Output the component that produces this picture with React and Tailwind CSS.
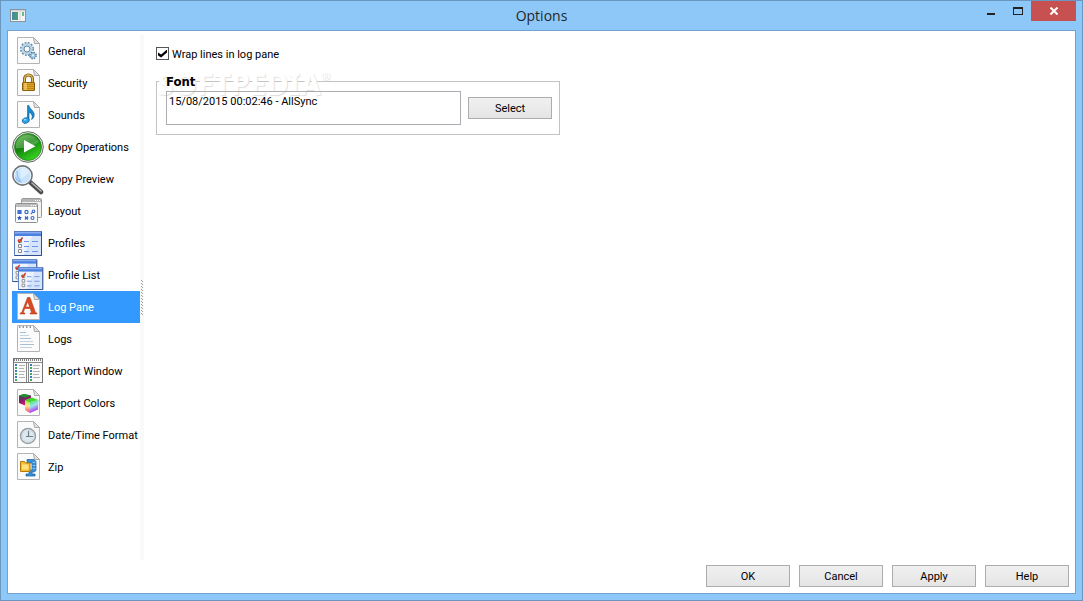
import { useState } from 'react';

// Paper sheet shared by most of the category icons
function Sheet({ children }) {
  return (
    <>
      <path d="M5.500 2.500h16l6 6v20h-22z" fill="#fbfbfb" stroke="#b4b4b4" />
      <path d="M21.500 2.500l6 6h-5z" fill="#e3e3e3" stroke="#a9a9a9" />
      {children}
    </>
  );
}

function GeneralIcon() {
  return (
    <Sheet>
      <circle cx="15" cy="14" r="5.500" fill="none" stroke="#66879f" strokeWidth="3" strokeDasharray="1.700 1.180" />
      <circle cx="15" cy="14" r="4.500" fill="none" stroke="#b3d6ec" strokeWidth="2.500" />
      <circle cx="15" cy="14" r="3" fill="#f8fafb" stroke="#5a7890" strokeWidth="0.900" />
      <circle cx="21" cy="20.500" r="2.600" fill="none" stroke="#4c7090" strokeWidth="2.500" strokeDasharray="1.300 0.740" />
      <circle cx="21" cy="20.500" r="1.900" fill="#e5f1f9" stroke="#8fbddc" strokeWidth="1.500" />
    </Sheet>
  );
}

function SecurityIcon() {
  return (
    <Sheet>
      <path d="M12.500 15v-3a4 4 0 0 1 8 0v3" fill="none" stroke="#7c5a12" strokeWidth="3" />
      <path d="M12.500 15v-3a4 4 0 0 1 8 0v3" fill="none" stroke="#e3be5b" strokeWidth="1.300" />
      <rect x="10.500" y="15.500" width="12" height="8" rx="0.500" fill="#e0a22a" stroke="#8a5d0b" />
      <path d="M11 17.500h11M11 19.500h11M11 21.500h11" stroke="#b57e13" strokeWidth="0.800" />
      <path d="M12 16h3v7h-3z" fill="#ffe38b" opacity="0.500" />
    </Sheet>
  );
}

function SoundsIcon() {
  return (
    <Sheet>
      <path d="M17 6.500c.5 4 6.500 5.500 5 11-.5 1.500-1.500 2.500-2.500 3 2-4-.5-6.500-2.500-7v8h-1.500v-15z" fill="#1787cf" stroke="#0d5f9e" strokeWidth="0.600" />
      <ellipse cx="13.800" cy="21.500" rx="3.600" ry="2.700" fill="#2ba4e8" stroke="#0d5f9e" strokeWidth="0.700" transform="rotate(-20 13.800 21.500)" />
      <ellipse cx="13" cy="20.700" rx="1.500" ry="0.800" fill="#9edcff" />
    </Sheet>
  );
}

function CopyOperationsIcon() {
  return (
    <>
      <defs>
        <linearGradient id="play" x1="0" y1="0" x2="0.600" y2="1">
          <stop offset="0" stopColor="#62b84c" />
          <stop offset="0.500" stopColor="#12800c" />
          <stop offset="1" stopColor="#35d320" />
        </linearGradient>
      </defs>
      <circle cx="16" cy="16" r="15.300" fill="#ededed" stroke="#5d6b5c" />
      <circle cx="16" cy="16" r="13.500" fill="url(#play)" stroke="#307c2b" strokeWidth="0.800" />
      <path d="M4 13a12.300 12.300 0 0 1 23-2c-6 4-14 7-23 6z" fill="#fff" opacity="0.220" />
      <path d="M12 9l11.500 6.300L12 21.500z" fill="#fff" />
    </>
  );
}

function CopyPreviewIcon() {
  return (
    <>
      <path d="M18.500 19.500l10.500 9.500" stroke="#4d4d4d" strokeWidth="4.500" strokeLinecap="round" />
      <path d="M20 20l9 8" stroke="#b5b5b5" strokeWidth="1.500" strokeLinecap="round" />
      <circle cx="10.500" cy="12.500" r="9.500" fill="#c8e3fb" stroke="#6f7478" strokeWidth="1.800" />
      <circle cx="10.500" cy="12.500" r="8.300" fill="none" stroke="#edf6ff" />
      <path d="M5 8c0 5 1 8 4 11M3.500 14c1 3 3 5 6 5" fill="none" stroke="#8fbdf0" strokeWidth="1.200" />
      <path d="M8 6c4-2 8 0 9 4l-8 6z" fill="#e7f4ff" opacity="0.700" />
    </>
  );
}

function LayoutIcon() {
  return (
    <>
      <rect x="9.500" y="3.500" width="20" height="19" rx="1" fill="#f2f2f2" stroke="#999" />
      <path d="M10 4h19v3H10z" fill="#b5b5b5" />
      <path d="M23 5.500h5" stroke="#fff" strokeDasharray="1 1" />
      <rect x="3.500" y="8.500" width="22" height="19" rx="1" fill="#fcfcfc" stroke="#909090" />
      <path d="M4 9h21v3H4z" fill="#bdbdbd" />
      <path d="M19 10.500h5" stroke="#fff" strokeDasharray="1 1" />
      <g fill="none" stroke="#3e6cc9" strokeWidth="1.200">
        <path d="M6 15.500h3v3H6zM6 18.500l3-3" fill="#7ba1e8" />
        <circle cx="14.500" cy="17" r="1.600" />
        <circle cx="21.500" cy="16.300" r="1.300" />
        <path d="M20.500 17.300l-1.700 1.700M13 21.500l3 3m0-3l-3 3m0-1.500h3" />
        <circle cx="20.500" cy="23" r="1.500" />
      </g>
      <path d="M7.500 20.500l.8 1.600 1.700.1-1.300 1.200.4 1.800-1.600-.9-1.600.9.4-1.800L5 22.200l1.700-.1z" fill="#2f5cb9" />
    </>
  );
}

function ChecklistWindow() {
  return (
    <>
      <rect x="0.500" y="0.500" width="27" height="24" fill="#eef4ff" stroke="#5b7dbd" />
      <path d="M20 1h7v23H10z" fill="#d5e3fb" />
      <path d="M1 1h26v4H1z" fill="#4a80e0" />
      <path d="M1 1h26v1.500H1z" fill="#86adf3" />
      <path d="M27.500 1v23.500H1" fill="none" stroke="#315089" />
      <path d="M5.500 8.500h3v3h-3zM5.500 13.500h3v3h-3zM5.500 18.500h3v3h-3z" transform="translate(-1)" fill="#fff" stroke="#8a8a8a" />
      <path d="M4 9l1.500 2L8.500 6.500" fill="none" stroke="#cf3218" strokeWidth="1.500" />
      <path d="M10 10.500h5m3 0h6M10 15.500h5m3 0h6M10 20.500h5m3 0h6" stroke="#6b95e2" />
    </>
  );
}

function ProfilesIcon() {
  return (
    <g transform="translate(2 4)">
      <ChecklistWindow />
    </g>
  );
}

function ProfileListIcon() {
  return (
    <>
      <g transform="scale(.9 .92)">
        <ChecklistWindow />
      </g>
      <g transform="translate(6 8) scale(.9 .92)">
        <ChecklistWindow />
      </g>
    </>
  );
}

function LogPaneIcon() {
  return (
    <Sheet>
      <path d="M15.500 6.500h2.500l5.500 15 1.500.7V23h-7v-.8l1.500-.7-1.300-4h-5.400l-1.500 4 1.700.7v.8H8v-.8l1.700-.7zm.2 4L13.600 16h4.100z" fill="#dc4a22" stroke="#a8300f" strokeWidth="0.500" fillRule="evenodd" />
    </Sheet>
  );
}

function LogsIcon() {
  return (
    <Sheet>
      <path d="M7 4h14" stroke="#9a9a9a" strokeWidth="2" strokeDasharray="1.500 2" />
      <path d="M8 9.500h6M8 15.500h11M8 21.500h14" stroke="#a5bfd8" />
      <path d="M8 12.500h9M8 18.500h13M8 24.500h12" stroke="#c4d2df" />
    </Sheet>
  );
}

function ReportWindowIcon() {
  return (
    <>
      <rect x="1.500" y="3.500" width="29" height="24" fill="#fafafa" stroke="#777" />
      <path d="M2 5h28" stroke="#808080" strokeWidth="2" strokeDasharray="1 1" />
      <path d="M2 7.500h28M14.500 8v19M16.500 8v19" stroke="#888" />
      <path d="M7 10.500h6M7 13.500h5M7 16.500h6M7 19.500h5M7 22.500h6M21 10.500h7M21 13.500h6M21 16.500h7M21 19.500h6M21 22.500h7" stroke="#b4b4b4" />
      <path d="M4 9v17M19 9v17" stroke="#387cb6" strokeWidth="2" strokeDasharray="2 4" />
      <path d="M4 12v14M19 12v14" stroke="#43a765" strokeWidth="2" strokeDasharray="2 4" />
    </>
  );
}

function ReportColorsIcon() {
  return (
    <Sheet>
      <defs>
        <linearGradient id="cubeLeft" x1="0" y1="0" x2="0" y2="1">
          <stop offset="0" stopColor="#7df03a" />
          <stop offset="0.450" stopColor="#fbe98a" />
          <stop offset="1" stopColor="#ff3a7c" />
        </linearGradient>
        <linearGradient id="cubeRight" x1="0" y1="0" x2="0.300" y2="1">
          <stop offset="0" stopColor="#3ce84a" />
          <stop offset="0.500" stopColor="#9ce0f0" />
          <stop offset="1" stopColor="#b41ff0" />
        </linearGradient>
        <linearGradient id="cubeBack" x1="0" y1="0" x2="0.600" y2="1">
          <stop offset="0" stopColor="#1d6b2a" />
          <stop offset="0.500" stopColor="#7c1f6a" />
          <stop offset="1" stopColor="#f01878" />
        </linearGradient>
      </defs>
      <path d="M7 8.500l5-1.500 7 1.500v8l-6 2-6-2.500z" fill="url(#cubeBack)" />
      <path d="M7 8.500l5-1.500 7 1.500-6 2z" fill="#1b9430" />
      <path d="M13 13l5 2v11l-5-3z" fill="url(#cubeLeft)" />
      <path d="M18 15l8.500-2-.5 9.500-8 3.500z" fill="url(#cubeRight)" />
      <path d="M13 13l7-2.500 6.500 2.500-8.500 2z" fill="#3fdc2c" />
    </Sheet>
  );
}

function DateTimeIcon() {
  return (
    <Sheet>
      <circle cx="16" cy="17" r="7.500" fill="#dfe8ed" stroke="#9aa2a8" strokeWidth="1.500" />
      <circle cx="16" cy="17" r="5.700" fill="none" stroke="#b7c9d4" strokeDasharray="1 2" />
      <path d="M16.500 12v5.500H21M16.500 17.500H14" fill="none" stroke="#6c7f8e" strokeWidth="1.200" />
    </Sheet>
  );
}

function ZipIcon() {
  return (
    <Sheet>
      <path d="M15 8.500h7l2 2v9l-2 1.500h-2v2h3v2h-9v-2h3v-4h3v-7h-5z" fill="#3a8fdb" stroke="#155e9f" strokeWidth="0.700" />
      <path d="M8.500 10.500h4l1 1.500h4.500v8.500H8.500z" fill="#f5bd2d" stroke="#b57a08" />
      <path d="M10 13.500h6.500v5H10z" fill="#ffe27e" />
      <path d="M20.500 11.500h3M20.500 14.500h3M20.500 17.500h3" stroke="#8bc2ef" />
    </Sheet>
  );
}

const CATEGORIES = [
  { label: 'General', Icon: GeneralIcon },
  { label: 'Security', Icon: SecurityIcon },
  { label: 'Sounds', Icon: SoundsIcon },
  { label: 'Copy Operations', Icon: CopyOperationsIcon },
  { label: 'Copy Preview', Icon: CopyPreviewIcon },
  { label: 'Layout', Icon: LayoutIcon },
  { label: 'Profiles', Icon: ProfilesIcon },
  { label: 'Profile List', Icon: ProfileListIcon },
  { label: 'Log Pane', Icon: LogPaneIcon },
  { label: 'Logs', Icon: LogsIcon },
  { label: 'Report Window', Icon: ReportWindowIcon },
  { label: 'Report Colors', Icon: ReportColorsIcon },
  { label: 'Date/Time Format', Icon: DateTimeIcon },
  { label: 'Zip', Icon: ZipIcon },
];

function PushButton({ children }) {
  return (
    <button
      type="button"
      className="h-[22px] w-[84px] shrink-0 border border-[#acacac] bg-linear-to-b from-[#f0f0f0] to-[#e5e5e5] pt-[2px] text-center hover:border-[#7eb4ea]"
    >
      {children}
    </button>
  );
}

function TitleBar() {
  return (
    <header className="grid h-[29px] grid-cols-[1fr_auto_1fr] items-center">
      <svg width="16" height="14" viewBox="0 0 16 14" className="ml-[3px]" aria-hidden="true">
        <rect x="0.500" y="0.500" width="15" height="12" fill="#f4f4f4" stroke="#8d9499" />
        <path d="M1 1h14v1.500H1z" fill="#cfd5d8" />
        <path d="M2 3h6v8H2z" fill="#4a9a7c" />
        <path d="M2 3h3v8H2z" fill="#4a86a5" opacity="0.600" />
        <path d="M9 3h2v8H9z" fill="#e3e3e3" />
        <path d="M12 3h2v4h-2z" fill="#73b886" />
      </svg>
      <h1 className="font-['Open_Sans',sans-serif] text-[14px] leading-5 text-[#262626]">Options</h1>
      <div className="flex items-start self-start justify-self-end">
        <button type="button" aria-label="Minimize" className="flex h-5 w-[27px] items-center justify-center">
          <svg width="8" height="20" viewBox="0 0 8 20">
            <path d="M0 12h8v2H0z" fill="#222" />
          </svg>
        </button>
        <button type="button" aria-label="Maximize" className="flex h-5 w-[27px] items-center justify-center">
          <svg width="10" height="20" viewBox="0 0 10 20">
            <path d="M0 6h10v8H0zM1 8v5h8V8z" fill="#222" fillRule="evenodd" />
          </svg>
        </button>
        <button type="button" aria-label="Close" className="flex h-5 w-[45px] items-center justify-center bg-[#c75050]">
          <svg width="8" height="8" viewBox="0 0 8 8">
            <path d="M.5.500l7 7m0-7l-7 7" stroke="#fff" strokeWidth="2" />
          </svg>
        </button>
      </div>
    </header>
  );
}

export default function App() {
  const [active, setActive] = useState('Log Pane');
  const [wrap, setWrap] = useState(true);

  return (
    <div className="flex min-h-screen flex-col border border-[#6a96c0] bg-[#8dc8f9] px-[6px] pb-[6px] font-['Roboto',sans-serif] text-[11px] leading-4 text-black">
      <TitleBar />
      <div className="flex flex-1 flex-col border border-[#71a4d3] bg-white">
        <div className="flex flex-1 pt-1 pl-1">
          <nav className="w-32 shrink-0">
            <ul>
              {CATEGORIES.map(({ label, Icon }) => (
                <li key={label}>
                  <button
                    type="button"
                    onClick={() => setActive(label)}
                    className={
                      active === label
                        ? 'flex h-8 w-full items-center gap-1 bg-[#3399ff] whitespace-nowrap text-white'
                        : 'flex h-8 w-full items-center gap-1 whitespace-nowrap'
                    }
                  >
                    <svg width="32" height="32" viewBox="0 0 32 32" className="shrink-0" aria-hidden="true">
                      <Icon />
                    </svg>
                    <span className="pt-[2px]">{label}</span>
                  </button>
                </li>
              ))}
            </ul>
          </nav>

          {/* Splitter with its grip */}
          <div className="flex w-1 shrink-0 items-center justify-center bg-[#f9f9f9]">
            <svg width="4" height="36" viewBox="0 0 4 36" aria-hidden="true">
              <path d="M1.500 0v36" stroke="#a0a0a0" strokeDasharray="1 2" />
              <path d="M2.500 1v35" stroke="#a0a0a0" strokeDasharray="1 2" />
            </svg>
          </div>

          <main className="min-w-0 flex-1 pt-3 pl-3">
            <label className="flex w-fit items-start gap-[3px]">
              <input
                type="checkbox"
                checked={wrap}
                onChange={(e) => setWrap(e.target.checked)}
                className="grid size-[13px] appearance-none place-content-center border border-[#555] bg-white before:hidden before:h-[8px] before:w-[9px] before:bg-black before:[clip-path:polygon(0_38%,35%_62%,100%_0,100%_38%,35%_100%,0_75%)] before:content-[''] checked:before:block"
              />
              Wrap lines in log pane
            </label>

            <fieldset className="relative isolate mt-[9px] flex w-[404px] max-w-full items-center gap-[7px] border border-[#c3c3c3] px-[7px] pt-[1px] pb-[9px]">
              <legend className="ml-[2px] pt-[2px] font-['DejaVu_Sans_Condensed','DejaVu_Sans',sans-serif] text-[13px] leading-4 font-bold">
                Font
              </legend>
              {/* Watermark sits behind the controls */}
              <span
                aria-hidden="true"
                className="pointer-events-none absolute top-[-22px] left-0 -z-10 flex font-['Noto_Sans',sans-serif] text-[30px] leading-8 font-bold text-white select-none [text-shadow:1px_1px_1px_#dedede]"
              >
                SOFTPEDIA
                <span className="text-[11px] leading-4">®</span>
              </span>
              <textarea
                readOnly
                aria-label="Font sample"
                defaultValue="15/08/2015 00:02:46 - AllSync"
                className="ml-[2px] h-[34px] min-w-0 flex-1 resize-none border border-[#abadb3] px-[2px] py-[2px] outline-none"
              />
              <PushButton>Select</PushButton>
            </fieldset>
          </main>
        </div>

        <footer className="flex justify-end gap-[9px] px-[6px] pt-[5px] pb-[6px]">
          <PushButton>OK</PushButton>
          <PushButton>Cancel</PushButton>
          <PushButton>Apply</PushButton>
          <PushButton>Help</PushButton>
        </footer>
      </div>
    </div>
  );
}
